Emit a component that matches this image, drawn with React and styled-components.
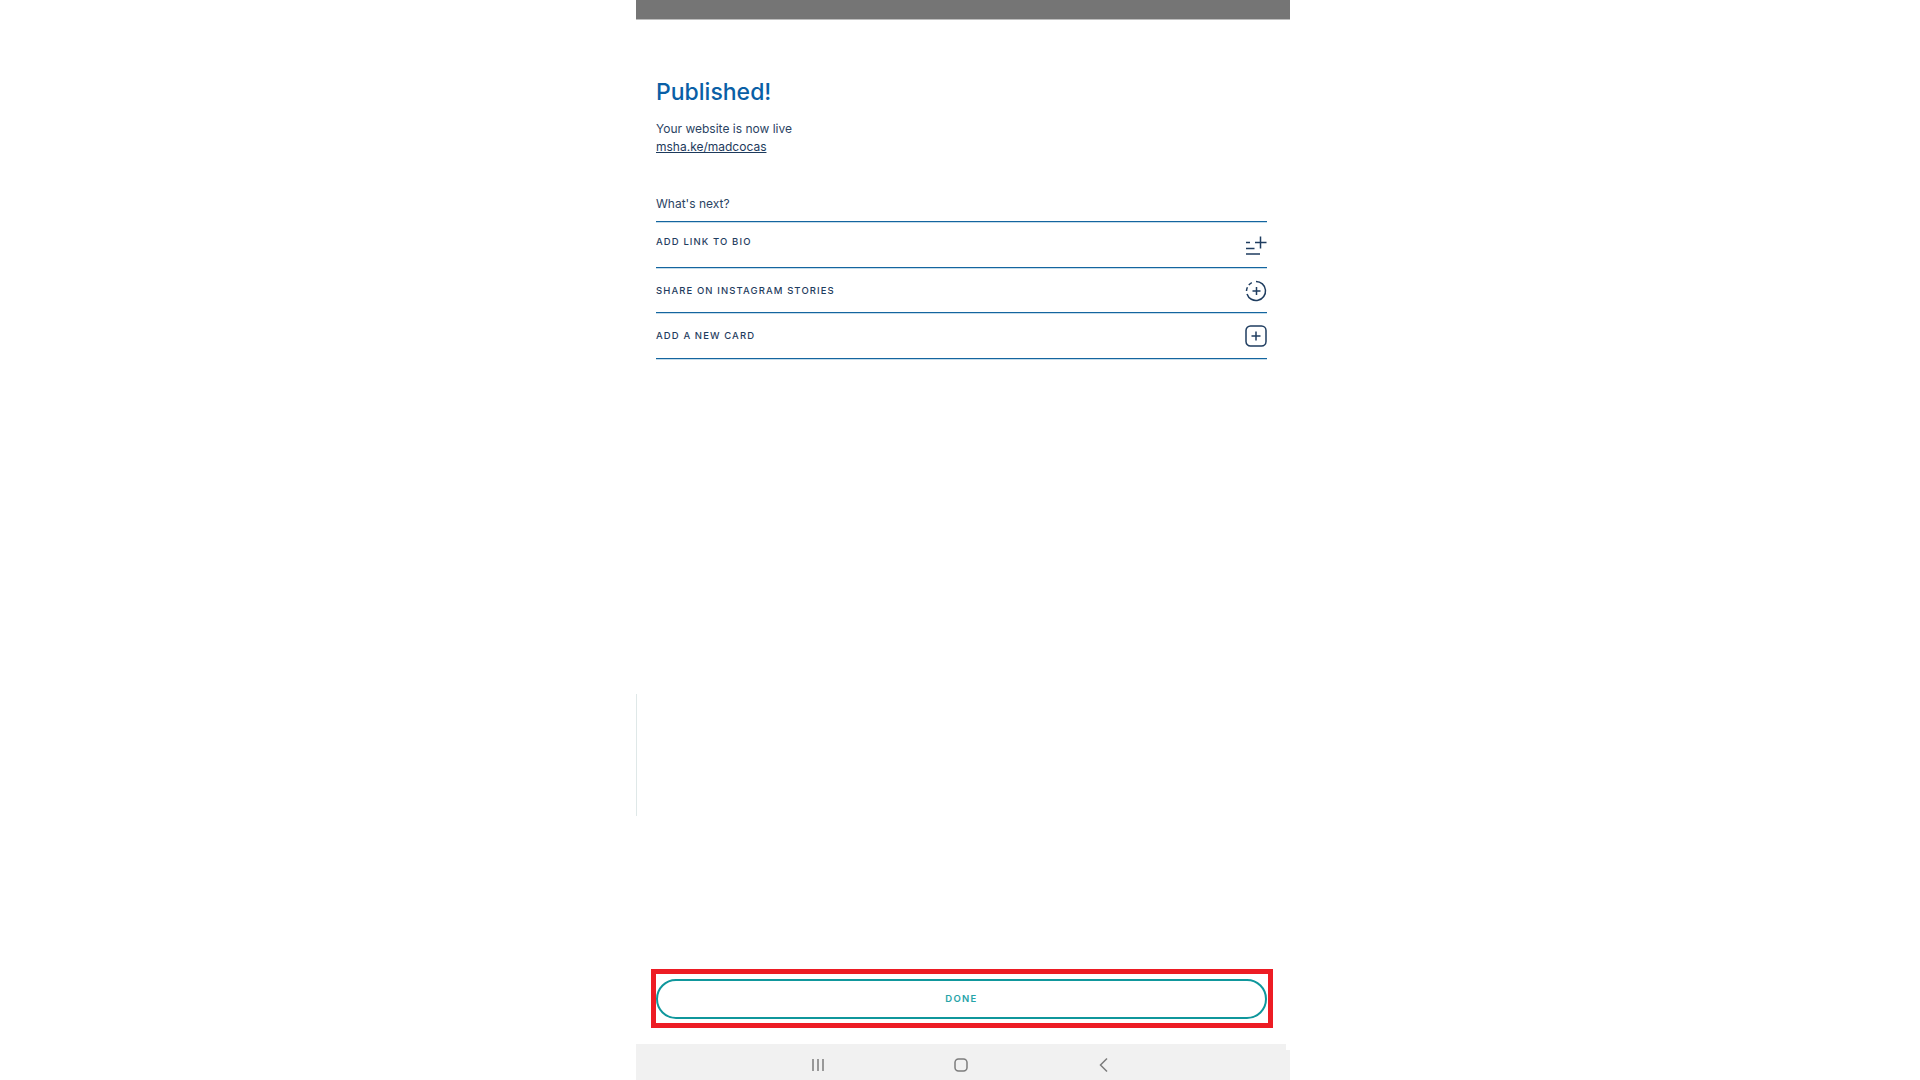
import React from 'react';
import styled, { createGlobalStyle } from 'styled-components';

const GlobalStyle = createGlobalStyle`
  html, body {
    margin: 0;
    padding: 0;
    background: #fff;
    overflow: hidden;
  }
`;

const Page = styled.div`
  width: 1920px;
  height: 1080px;
  box-sizing: border-box;
  padding-left: 6px;
  display: flex;
  justify-content: center;
  font-family: Inter, "Liberation Sans", sans-serif;
`;

const Phone = styled.div`
  position: relative;
  width: 654px;
  height: 1080px;
  display: flex;
  flex-direction: column;
`;

const StatusBar = styled.div`
  height: 19px;
  flex: none;
  background: #757575;
  border-bottom: 1px solid #bdbdbd;
`;

const EdgeMark = styled.div`
  position: absolute;
  left: 0;
  top: 694px;
  width: 1px;
  height: 122px;
  background: #dfe8e8;
`;

const Content = styled.main`
  flex: 1;
  padding: 54px 23px 0 20px;
`;

const Title = styled.h1`
  margin: 0;
  font-size: 23px;
  line-height: 36px;
  font-weight: 500;
  color: #0a5fa6;
`;

const Lead = styled.p`
  margin: 10px 0 0;
  font-size: 12px;
  line-height: 18px;
  color: #2b4363;
`;

const LiveLink = styled.a`
  display: block;
  font-size: 12px;
  line-height: 18px;
  color: #1d3a5c;
  text-decoration: underline;
`;

const NextHeading = styled.h2`
  margin: 39px 0 0;
  padding-bottom: 8px;
  font-size: 12px;
  line-height: 18px;
  font-weight: 400;
  color: #2b4363;
  border-bottom: 1px solid #14659f;
  box-shadow: 0 1px 0 #c5dcea;
`;

const Row = styled.div`
  height: 44.5px;
  box-sizing: content-box;
  display: flex;
  justify-content: space-between;
  align-items: ${(p) => (p.$top ? 'flex-start' : 'center')};
  border-bottom: 1px solid #14659f;
  box-shadow: 0 1px 0 #c5dcea;
`;

const RowLabel = styled.span`
  font-size: 9.5px;
  line-height: 14px;
  font-weight: 500;
  letter-spacing: 1.1px;
  color: #1f3d60;
  margin-top: ${(p) => (p.$top ? '13px' : '2px')};
`;

const Icon = styled.svg`
  flex: none;
  width: 22px;
  height: 22px;
  margin-top: ${(p) => (p.$top ? '14px' : '2px')};
  fill: none;
  stroke: #1f3d60;
  stroke-width: 1.5;
`;

const Highlight = styled.div`
  flex: none;
  margin: 0 17px 0 15px;
  height: 59px;
  box-sizing: border-box;
  border: 5px solid #ed1c24;
  display: flex;
  align-items: center;
`;

const DoneButton = styled.button`
  width: 611px;
  height: 40px;
  flex: none;
  padding: 0;
  background: #fff;
  border: 2px solid #0f979c;
  border-radius: 20px;
  font-family: inherit;
  font-size: 9.5px;
  font-weight: 600;
  letter-spacing: 1.3px;
  color: #26a3a8;
`;

const NavBar = styled.nav`
  position: relative;
  flex: none;
  margin-top: 16px;
  height: 36px;
  box-sizing: border-box;
  padding: 5px 5px 0 0;
  background: #f1f1f1;
  display: flex;
  justify-content: center;
  align-items: center;
  gap: 127px;

  &::after {
    content: '';
    position: absolute;
    top: 0;
    right: 0;
    width: 4px;
    height: 6px;
    background: #fff;
  }
`;

const NavIcon = styled.svg`
  width: 16px;
  height: 16px;
  fill: none;
  stroke: #7c7c7c;
  stroke-width: 1.5;
`;

export default function App() {
  return (
    <>
      <GlobalStyle />
      <Page>
        <Phone>
          <StatusBar />
          <EdgeMark />
          <Content>
            <Title>Published!</Title>
            <Lead>Your website is now live</Lead>
            <LiveLink>msha.ke/madcocas</LiveLink>
            <NextHeading>What's next?</NextHeading>
            <Row $top>
              <RowLabel $top>ADD LINK TO BIO</RowLabel>
              <Icon $top viewBox="0 0 22 22">
                <path d="M1 6.5h4M1 12.5h8.5M1 18h14M10 6.5h11.5M15.5 0.5v12" />
              </Icon>
            </Row>
            <Row>
              <RowLabel>SHARE ON INSTAGRAM STORIES</RowLabel>
              <Icon viewBox="0 0 22 22">
                <path d="M11 1.5a9.5 9.5 0 1 1-9 12.5" />
                <path d="M1.5 11a9.5 9.5 0 0 1 .9-3.8M3.8 5a9.5 9.5 0 0 1 3-2.4" />
                <path d="M11.5 7v8M7.5 11h8" />
              </Icon>
            </Row>
            <Row>
              <RowLabel>ADD A NEW CARD</RowLabel>
              <Icon viewBox="0 0 22 22">
                <rect x="1" y="1" width="20" height="20" rx="4.5" />
                <path d="M11 6.5v9M6.5 11h9" />
              </Icon>
            </Row>
          </Content>
          <Highlight>
            <DoneButton>DONE</DoneButton>
          </Highlight>
          <NavBar>
            <NavIcon viewBox="0 0 16 16">
              <path d="M3 2v12M8 2v12M13 2v12" />
            </NavIcon>
            <NavIcon viewBox="0 0 16 16">
              <rect x="2" y="2" width="12" height="12" rx="3.5" />
            </NavIcon>
            <NavIcon viewBox="0 0 16 16">
              <path d="M11 1.5L4.5 8l6.5 6.5" />
            </NavIcon>
          </NavBar>
        </Phone>
      </Page>
    </>
  );
}
